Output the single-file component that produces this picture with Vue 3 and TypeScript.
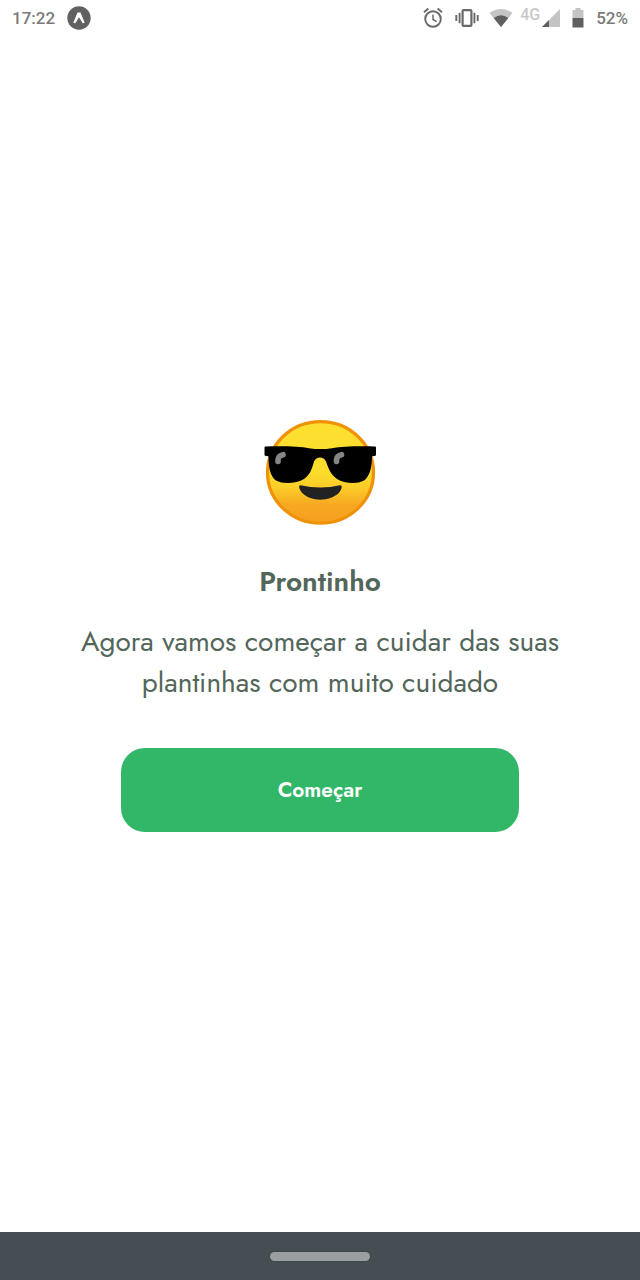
<script setup lang="ts">
import { ref } from 'vue'

const time = ref<string>('17:22')
const battery = ref<string>('52%')
const title = 'Prontinho'
const subtitle = ['Agora vamos começar a cuidar das suas', 'plantinhas com muito cuidado']
</script>

<template>
  <div class="screen">
    <header class="status">
      <div class="group left">
        <span>{{ time }}</span>
        <svg width="24" height="24" viewBox="0 0 24 24" aria-hidden="true">
          <circle cx="12" cy="12" r="11.7" fill="#616161" />
          <path d="M6.300 16.800 10.500 6.600h3l4.200 10.200-2 .5L12 11.200l-3.700 6.100z" fill="#fff" />
        </svg>
      </div>
      <div class="group right">
        <svg class="alarm" width="20" height="22" viewBox="0 0 20 22" aria-hidden="true">
          <g fill="none" stroke="#696969" stroke-width="1.9">
            <circle cx="10" cy="12" r="7.8" />
            <path d="M1 5.2 5.4 1.6M19 5.2l-4.4-3.6" />
            <path d="M10 7.5v5l3.6 2.2" stroke-width="1.5" />
          </g>
        </svg>
        <svg class="vibrate" width="24" height="20" viewBox="0 0 24 20" aria-hidden="true">
          <rect x="7.6" y="2.1" width="8.8" height="15.8" rx=".8" fill="none" stroke="#696969" stroke-width="2.2" />
          <path d="M4.6 4.8v10.4M1.3 7v6M19.4 4.8v10.4M22.7 7v6" stroke="#696969" stroke-width="1.9" />
        </svg>
        <svg class="wifi" width="24" height="20" viewBox="0 0 24 20" aria-hidden="true">
          <path d="M.5 5Q12-3 23.500 5L12 19z" fill="#c4c4c4" />
          <path d="M4.700 10Q12 4.400 19.300 10L12 19z" fill="#606060" />
        </svg>
        <span class="network">4G</span>
        <svg class="signal" width="18" height="18" viewBox="0 0 18 18" aria-hidden="true">
          <path d="M18 0v18H0z" fill="#c4c4c4" />
          <path d="M7 11v7H0z" fill="#606060" />
        </svg>
        <svg class="battery" width="12" height="20" viewBox="0 0 12 20" aria-hidden="true">
          <path d="M3.500 0h5v2H11.500v8H.5V2h3z" fill="#c4c4c4" />
          <path d="M.5 10h11v9.500H.5z" fill="#606060" />
        </svg>
        <span>{{ battery }}</span>
      </div>
    </header>

    <main class="content">
      <svg class="emoji" width="114" height="108" viewBox="-1 0 114 108" role="img" aria-label="Rosto sorridente com óculos escuros">
        <defs>
          <linearGradient id="face" x1="0" y1="0" x2="0" y2="1">
            <stop offset="0" stop-color="#fde030" />
            <stop offset=".5" stop-color="#fddc2c" />
            <stop offset=".65" stop-color="#fbcd28" />
            <stop offset=".82" stop-color="#f7a822" />
            <stop offset="1" stop-color="#f5a020" />
          </linearGradient>
        </defs>
        <ellipse cx="56.500" cy="54.400" rx="53" ry="50.800" fill="url(#face)" stroke="#f09208" stroke-width="3.200" />
        <path d="M.5 29.500Q.5 28.500 1.500 28.500C20 28 36 28.500 45 30.200Q56.500 32 68 30.200C78 28.500 94 28 111 28.500Q112 28.500 112 29.500V37.200Q111.500 38 108 38.200C108 49 106 58 100 62.500C93 66.500 80 65.500 73 61C66 56 64.500 50 62 43.500Q60 39.500 56 39.500T50 43.500C48 50 47 56 40 61C33 65.500 19 66.500 12 62.500C6 58 4.500 49 4.500 38.200Q1 38 .5 37.200z" fill="#000" />
        <g fill="none" stroke="#858585" stroke-width="5.600" stroke-linecap="round" stroke-linejoin="round">
          <path d="M14 43.500V41.500Q14.500 37.500 19 36.700" />
          <path d="M72.500 43.500V41.500Q73 37.500 77.500 36.700" />
        </g>
        <path d="M36.500 67.300Q56.500 71.700 76 67.300C79 67 77.800 71.300 75 74.800C65.500 84 47.500 84 38.500 75.300C35 71.500 34 67 36.500 67.300z" fill="#222" />
      </svg>
      <h1>{{ title }}</h1>
      <p><span v-for="line in subtitle" :key="line">{{ line }}</span></p>
      <button type="button">Começar</button>
    </main>

    <footer class="nav"><span class="handle"></span></footer>
  </div>
</template>

<style>
body {
  margin: 0;
  background: #fff;
}
</style>

<style scoped>
.screen {
  min-height: 100vh;
  display: flex;
  flex-direction: column;
  background: #fff;
  color: #52665a;
  font-family: Jost, Lato, sans-serif;
}

.status {
  height: 36px;
  padding: 0 12px;
  display: flex;
  align-items: center;
  justify-content: space-between;
  color: #7a7a7a;
  font: 500 17px/20px Roboto, sans-serif;
}

.group {
  display: flex;
  align-items: center;
}

.left {
  gap: 12px;
}

.alarm {
  margin-right: 12px;
}

.vibrate {
  margin-right: 10px;
}

.wifi {
  margin-right: 7px;
}

.network {
  margin-right: 2px;
  padding-bottom: 6px;
  color: #c8c8c8;
  font-size: 16px;
}

.signal {
  margin-right: 12px;
}

.battery {
  margin-right: 12px;
}

.content {
  flex: 1;
  display: flex;
  flex-direction: column;
  align-items: center;
  justify-content: center;
  padding: 0 60px 18px;
  text-align: center;
}

h1 {
  margin: 36px 0 0;
  font-size: 28px;
  line-height: 40px;
  font-weight: 600;
}

p {
  margin: 19px 0 0;
  font-size: 28px;
  line-height: 41px;
}

p span {
  display: block;
}

button {
  width: 100%;
  max-width: 398px;
  height: 84px;
  margin-top: 45px;
  border: 0;
  border-radius: 24px;
  background: #32b768;
  color: #fff;
  font: 600 21px/28px Jost, Lato, sans-serif;
  cursor: pointer;
}

.nav {
  height: 48px;
  display: flex;
  align-items: center;
  justify-content: center;
  background: #464e54;
}

.handle {
  width: 100px;
  height: 9px;
  border-radius: 5px;
  background: #9b9f9f;
  box-shadow: 0 0 2px #343a3e;
}
</style>
